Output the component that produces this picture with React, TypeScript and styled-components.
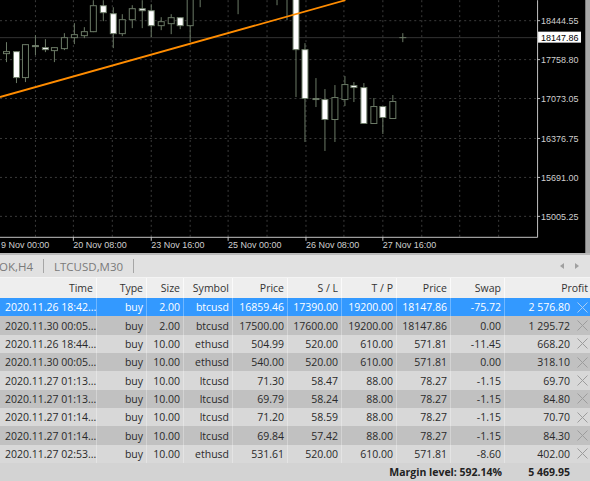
import styled, { createGlobalStyle } from "styled-components";

const GlobalStyle = createGlobalStyle`
  html, body {
    margin: 0;
    padding: 0;
    background: #d4d4d4;
    overflow: hidden;
  }
`;

const Screen = styled.div`
  width: 590px;
  height: 481px;
  display: flex;
  flex-direction: column;
  overflow: hidden;
  background: #d3d3d3;
  font-family: "Open Sans", "Noto Sans", sans-serif;
`;

const ChartPanel = styled.div`
  height: 253px;
  flex: none;
  display: flex;
  background: #000;
`;

const ChartSvg = styled.svg`
  display: block;
  width: 586px;
  height: 253px;
  font-family: "Liberation Sans", Arial, sans-serif;
  font-size: 9px;
`;

const ChartEdge = styled.div`
  width: 4px;
  background: #a8a8a8;
  border-left: 1px solid #7a7a7a;
`;

const TabBar = styled.div`
  height: 22px;
  flex: none;
  display: flex;
  align-items: center;
  background: #e1e1e1;
  border-top: 2px solid #b9b9b9;
  border-bottom: 1px solid #f4f4f4;
  overflow: hidden;
`;

const Tab = styled.div<{ $cut?: boolean }>`
  display: flex;
  align-items: center;
  height: 14px;
  padding: 0 10px;
  margin-left: ${(p) => (p.$cut ? "-11px" : "0")};
  border-right: 1px solid #a6a6a6;
  color: #7a7a7a;
  font-size: 11.5px;
  white-space: nowrap;
`;

const TabArrows = styled.div`
  margin-left: auto;
  display: flex;
  gap: 11px;
  padding-right: 11px;
`;

const Arrow = styled.span<{ $dir: "left" | "right" }>`
  width: 0;
  height: 0;
  border-top: 3px solid transparent;
  border-bottom: 3px solid transparent;
  ${(p) =>
    p.$dir === "left"
      ? "border-right: 4px solid #a0a0a0;"
      : "border-left: 4px solid #a0a0a0;"}
`;

const columns = "97px 50px 37px 49px 55px 54px 55px 54px 54px 1fr";

const HeaderRow = styled.div`
  display: grid;
  grid-template-columns: ${columns};
  height: 20px;
  flex: none;
  background: #eeeeee;
  color: #333;
  font-size: 10.5px;
`;

const HeaderCell = styled.div<{ $pad?: number }>`
  display: flex;
  align-items: center;
  justify-content: flex-end;
  padding-right: ${(p) => p.$pad ?? 3}px;
  border-right: 1px solid #fafafa;
  white-space: nowrap;
  &:last-child {
    border-right: none;
  }
`;

type Tone = "selected" | "dark" | "light";

const toneBg: Record<Tone, string> = {
  selected: "#3399ff",
  dark: "#c1c1c1",
  light: "#d8d8d8",
};

const Row = styled.div<{ $tone: Tone }>`
  display: grid;
  grid-template-columns: ${columns};
  height: 18.35px;
  flex: none;
  background: ${(p) => toneBg[p.$tone]};
  color: ${(p) => (p.$tone === "selected" ? "#ffffff" : "#2a2a2a")};
  font-size: 10.5px;
`;

const Cell = styled.div<{ $left?: boolean }>`
  display: flex;
  align-items: center;
  justify-content: ${(p) => (p.$left ? "flex-start" : "flex-end")};
  padding: ${(p) => (p.$left ? "0 0 0 5px" : "0 3px 0 0")};
  border-right: 1px solid rgba(255, 255, 255, 0.3);
  white-space: nowrap;
  overflow: hidden;
`;

const ProfitCell = styled.div<{ $total?: boolean }>`
  display: flex;
  align-items: center;
  justify-content: flex-end;
  gap: 7px;
  padding-right: ${(p) => (p.$total ? "20px" : "2px")};
  white-space: nowrap;
`;

const Footer = styled.div`
  flex: 1;
  display: grid;
  grid-template-columns: ${columns};
  align-items: center;
  color: #222;
  font-size: 10.5px;
  font-weight: 700;
`;

const MarginLevel = styled.div`
  grid-column: 1 / 10;
  text-align: right;
  padding-right: 3px;
`;

const CloseIcon = ({ color }: { color: string }) => (
  <svg width="11" height="11" viewBox="0 0 11 11">
    <path d="M0.5 0.5 L10.5 10.5 M10.5 0.5 L0.5 10.5" stroke={color} strokeWidth="1" fill="none" />
  </svg>
);

// x, bodyTop, bodyBottom, wickTop, wickBottom, white
const candles: [number, number, number, number, number, boolean][] = [
  [6, 51, 53, 42, 62, false],
  [16, 51, 77, 51, 83, true],
  [25, 44, 77, 44, 82, false],
  [35, 45, 46, 35, 55, true],
  [45, 47, 49, 39, 52, true],
  [54, 47, 50, 47, 62, false],
  [64, 37, 48, 33, 50, false],
  [74, 34, 37, 23, 44, false],
  [84, 31, 35, 27, 38, false],
  [93, 5, 31, 0, 32, false],
  [103, 5, 12, 0, 21, true],
  [113, 13, 33, 7, 48, true],
  [122, 19, 33, 14, 36, false],
  [132, 8, 19, 5, 28, false],
  [142, 8, 10, 0, 28, true],
  [151, 10, 25, 4, 37, true],
  [161, 21, 25, 17, 30, false],
  [171, 17, 23, 14, 34, false],
  [180, 17, 25, 17, 29, true],
  [190, -2, 25, -2, 42, false],
  [200, -20, -8, -20, 7, true],
  [238, -30, -10, -30, 14, true],
  [277, -30, -10, -30, 5, true],
  [287, -30, -10, -30, 20, true],
  [296, -5, 49, -5, 97, true],
  [305, 49, 98, 43, 142, true],
  [316, 98, 99, 78, 107, true],
  [325, 99, 119, 89, 151, true],
  [335, 97, 119, 85, 142, false],
  [345, 84, 99, 76, 106, false],
  [354, 85, 87, 82, 102, true],
  [364, 87, 123, 83, 123, true],
  [374, 106, 123, 98, 124, false],
  [383, 106, 117, 106, 134, true],
  [393, 101, 118, 95, 119, false],
];

const priceLevels = ["18444.55", "17758.80", "17073.05", "16376.75", "15691.00", "15005.25"];
const timeLabels = ["9 Nov 00:00", "20 Nov 08:00", "23 Nov 16:00", "25 Nov 00:00", "26 Nov 08:00", "27 Nov 16:00"];

const wick = "#6b7a66";

const Chart = () => {
  const verticals = Array.from({ length: 13 }, (_, k) => -4 + 38.7 * (k + 1));
  return (
    <ChartSvg viewBox="0 0 586 253">
      {verticals.map((x) => (
        <line key={x} x1={Math.round(x) + 0.5} y1={0} x2={Math.round(x) + 0.5} y2={237} stroke="#3b3b3b" strokeDasharray="2 3" />
      ))}
      {priceLevels.map((p, j) => {
        const y = Math.round(20 + 39.2 * j) + 0.5;
        return (
          <g key={p}>
            <line x1={0} y1={y} x2={538} y2={y} stroke="#3b3b3b" strokeDasharray="2 3" />
            <line x1={538} y1={y} x2={541} y2={y} stroke="#c0c0c0" />
            <text x={542} y={y + 3.2} fill="#cfcfcf">{p}</text>
          </g>
        );
      })}
      <line x1={0} y1={37.5} x2={538} y2={37.5} stroke="#333" />
      {candles.map(([x, bt, bb, wt, wb, white]) => (
        <g key={x}>
          <line x1={x + 0.5} y1={wt} x2={x + 0.5} y2={wb} stroke={wick} />
          <rect x={x - 2.5} y={bt + 0.5} width={6} height={Math.max(bb - bt, 1)} fill={white ? "#fff" : "#000"} stroke={wick} />
        </g>
      ))}
      <line x1={403.5} y1={33} x2={403.5} y2={42} stroke={wick} />
      <line x1={400} y1={37.5} x2={407} y2={37.5} stroke={wick} />
      <line x1={0} y1={97} x2={346} y2={0} stroke="#ff8c00" strokeWidth={1.8} />
      <line x1={538.5} y1={0} x2={538.5} y2={237.5} stroke="#c4c4c4" />
      <line x1={0} y1={237.5} x2={538.5} y2={237.5} stroke="#c4c4c4" />
      {timeLabels.map((t, k) => {
        const x = Math.round(-4 + 77.4 * k) + 0.5;
        return (
          <g key={t}>
            <line x1={x} y1={237} x2={x} y2={241} stroke="#c4c4c4" />
            <text x={k === 0 ? 1 : x} y={248} fill="#cfcfcf">{t}</text>
          </g>
        );
      })}
      <rect x={539} y={31.5} width={43} height={11} fill="#fff" />
      <text x={542} y={40.5} fill="#000">18147.86</text>
    </ChartSvg>
  );
};

type Order = {
  time: string;
  size: string;
  symbol: string;
  price: string;
  sl: string;
  tp: string;
  current: string;
  swap: string;
  profit: string;
};

const orders: Order[] = [
  { time: "2020.11.26 18:42...", size: "2.00", symbol: "btcusd", price: "16859.46", sl: "17390.00", tp: "19200.00", current: "18147.86", swap: "-75.72", profit: "2 576.80" },
  { time: "2020.11.30 00:05...", size: "2.00", symbol: "btcusd", price: "17500.00", sl: "17600.00", tp: "19200.00", current: "18147.86", swap: "0.00", profit: "1 295.72" },
  { time: "2020.11.26 18:44...", size: "10.00", symbol: "ethusd", price: "504.99", sl: "520.00", tp: "610.00", current: "571.81", swap: "-11.45", profit: "668.20" },
  { time: "2020.11.30 00:05...", size: "10.00", symbol: "ethusd", price: "540.00", sl: "520.00", tp: "610.00", current: "571.81", swap: "0.00", profit: "318.10" },
  { time: "2020.11.27 01:13...", size: "10.00", symbol: "ltcusd", price: "71.30", sl: "58.47", tp: "88.00", current: "78.27", swap: "-1.15", profit: "69.70" },
  { time: "2020.11.27 01:13...", size: "10.00", symbol: "ltcusd", price: "69.79", sl: "58.24", tp: "88.00", current: "78.27", swap: "-1.15", profit: "84.80" },
  { time: "2020.11.27 01:14...", size: "10.00", symbol: "ltcusd", price: "71.20", sl: "58.59", tp: "88.00", current: "78.27", swap: "-1.15", profit: "70.70" },
  { time: "2020.11.27 01:14...", size: "10.00", symbol: "ltcusd", price: "69.84", sl: "57.42", tp: "88.00", current: "78.27", swap: "-1.15", profit: "84.30" },
  { time: "2020.11.27 02:53...", size: "10.00", symbol: "ethusd", price: "531.61", sl: "520.00", tp: "610.00", current: "571.81", swap: "-8.60", profit: "402.00" },
];

const headers = ["Time", "Type", "Size", "Symbol", "Price", "S / L", "T / P", "Price", "Swap"];

export default function App() {
  return (
    <>
      <GlobalStyle />
      <Screen>
        <ChartPanel>
          <Chart />
          <ChartEdge />
        </ChartPanel>
        <TabBar>
          <Tab $cut>OK,H4</Tab>
          <Tab>LTCUSD,M30</Tab>
          <TabArrows>
            <Arrow $dir="left" />
            <Arrow $dir="right" />
          </TabArrows>
        </TabBar>
        <HeaderRow>
          {headers.map((h, i) => (
            <HeaderCell key={i}>{h}</HeaderCell>
          ))}
          <HeaderCell $pad={2}>Profit</HeaderCell>
        </HeaderRow>
        {orders.map((o, i) => {
          const tone: Tone = i === 0 ? "selected" : i % 2 === 1 ? "dark" : "light";
          return (
            <Row key={i} $tone={tone}>
              <Cell $left>{o.time}</Cell>
              <Cell>buy</Cell>
              <Cell>{o.size}</Cell>
              <Cell>{o.symbol}</Cell>
              <Cell>{o.price}</Cell>
              <Cell>{o.sl}</Cell>
              <Cell>{o.tp}</Cell>
              <Cell>{o.current}</Cell>
              <Cell>{o.swap}</Cell>
              <ProfitCell>
                {o.profit}
                <CloseIcon color={tone === "selected" ? "#a9cdf2" : "#9c9c9c"} />
              </ProfitCell>
            </Row>
          );
        })}
        <Footer>
          <MarginLevel>Margin level: 592.14%</MarginLevel>
          <ProfitCell $total>5 469.95</ProfitCell>
        </Footer>
      </Screen>
    </>
  );
}
